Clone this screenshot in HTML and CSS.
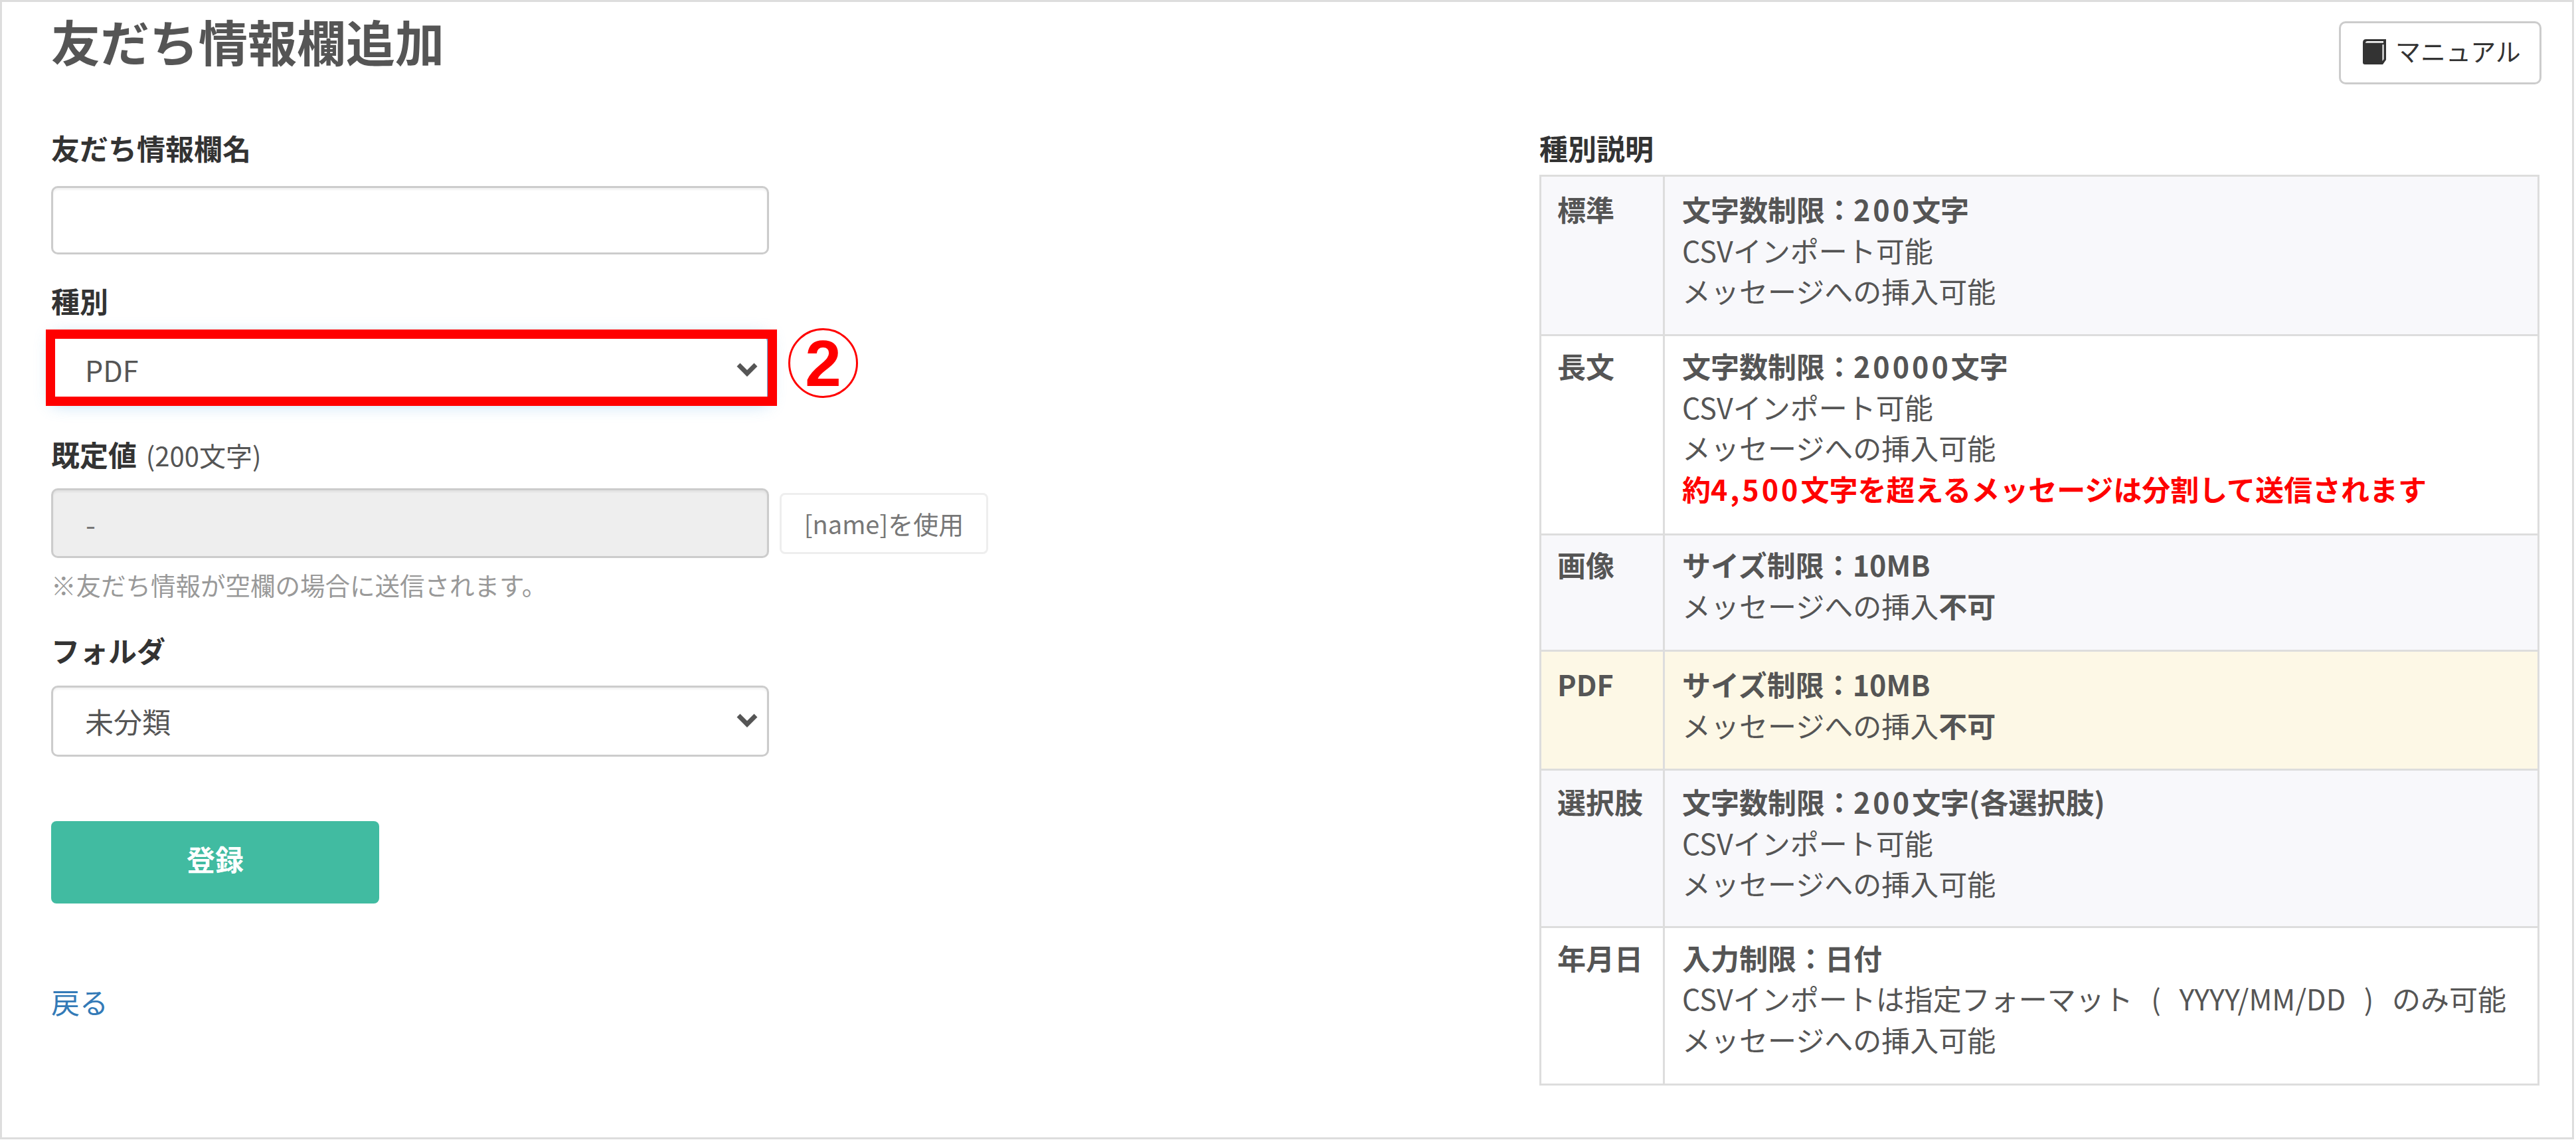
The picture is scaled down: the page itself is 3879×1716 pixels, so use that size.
FILE: index.html
```html
<!DOCTYPE html>
<html lang="ja">
<head>
<meta charset="utf-8">
<title>友だち情報欄追加</title>
<link rel="stylesheet" href="styles.css">
</head>
<body>
<div class="frame">
  <header class="header">
    <h1 class="title">友だち情報欄追加</h1>
    <button class="manual" type="button">
      <svg class="book" viewBox="0 0 35 38" aria-hidden="true"><path d="M5 0H35V31L30 38H3Q0 38 0 35V5Q0 0 5 0Z" fill="#333"/><path d="M4 5.500Q4 3 7 3H31V5.500H7Z" fill="#fff"/><path d="M29.500 8H31.500V30L29.500 33Z" fill="#fff"/></svg>
      <span>マニュアル</span>
    </button>
  </header>
  <div class="columns">
    <form class="form">
      <label class="label first name-label">友だち情報欄名</label>
      <input class="control name-input" type="text">

      <label class="label">種別</label>
      <div class="select-wrap marked">
        <select class="control select focus"><option>PDF</option></select>
        <svg class="chevron" viewBox="0 0 34 24" aria-hidden="true"><path d="M4 5L17 18L30 5" fill="none" stroke="#555" stroke-width="7"/></svg>
        <span class="red-box"></span>
        <span class="circled">2</span>
      </div>

      <label class="label third">既定値 <small class="limit">(200文字)</small></label>
      <div class="default-row">
        <input class="control default-input" type="text" value="-" disabled>
        <button class="use-name" type="button">[name]を使用</button>
      </div>
      <p class="note">※友だち情報が空欄の場合に送信されます。</p>

      <label class="label folder-label">フォルダ</label>
      <div class="select-wrap">
        <select class="control select folder-select"><option>未分類</option></select>
        <svg class="chevron" viewBox="0 0 34 24" aria-hidden="true"><path d="M4 5L17 18L30 5" fill="none" stroke="#555" stroke-width="7"/></svg>
      </div>

      <button class="submit" type="button">登録</button>
      <a class="back" href="#">戻る</a>
    </form>
    <section class="help">
      <div class="label first">種別説明</div>
      <table class="types">
        <tbody>
          <tr class="odd r1"><th>標準</th><td><b>文字数制限：<span class="num">200</span>文字</b><br>CSVインポート可能<br>メッセージへの挿入可能</td></tr>
          <tr class="r2"><th>長文</th><td><b>文字数制限：<span class="num">20000</span>文字</b><br>CSVインポート可能<br>メッセージへの挿入可能<br><b class="warn">約<span class="num">4,500</span>文字を超えるメッセージは分割して送信されます</b></td></tr>
          <tr class="odd r3"><th>画像</th><td><b>サイズ制限：10MB</b><br>メッセージへの挿入<b>不可</b></td></tr>
          <tr class="active r4"><th>PDF</th><td><b>サイズ制限：10MB</b><br>メッセージへの挿入<b>不可</b></td></tr>
          <tr class="odd r5"><th>選択肢</th><td><b>文字数制限：<span class="num">200</span>文字(各選択肢)</b><br>CSVインポート可能<br>メッセージへの挿入可能</td></tr>
          <tr class="r6"><th>年月日</th><td><b>入力制限：日付</b><br><span class="wide-spaces">CSVインポートは指定フォーマット ( YYYY/MM/DD ) のみ可能</span><br>メッセージへの挿入可能</td></tr>
        </tbody>
      </table>
    </section>
  </div>
</div>
</body>
</html>
```
FILE: styles.css
```css
* { box-sizing: border-box; }
html, body { margin: 0; padding: 0; background: #fff; }
body {
  font-family: "Noto Sans CJK JP", "Noto Sans", sans-serif;
  color: #555;
  font-size: 43px;
  line-height: 61.6px;
}
.frame {
  width: 3876px;
  height: 1715px;
  border: 3px solid #ddd;
  padding: 29px 49px 0 74px;
}
.header {
  display: flex;
  justify-content: space-between;
  align-items: flex-start;
}
.title {
  margin: -2px 0 0;
  font-size: 74px;
  line-height: 62px;
  font-weight: 700;
  color: #555;
  letter-spacing: 0;
}
.manual {
  width: 305px;
  height: 95px;
  margin-right: -3px;
  display: flex;
  align-items: center;
  padding: 0 0 8px 33px;
  gap: 14px;
  background: #fff;
  border: 3px solid #ccc;
  border-radius: 10px;
  color: #333;
  font: inherit;
  font-size: 38px;
  line-height: 50px;
}
.book { width: 35px; height: 38px; flex: none; margin-top: 4px; }
.columns {
  display: grid;
  grid-template-columns: 2241px 1fr;
  margin-top: 64px;
}
.form { display: flex; flex-direction: column; align-items: flex-start; }
.label {
  display: block;
  margin: 44px 0 21px;
  font-weight: 700;
  color: #333;
  line-height: 62px;
}
.label.first { margin-top: 0; }
.label.name-label { margin-bottom: 27px; }
.label.third { margin: 43px 0 19px; }
.label.folder-label { margin: 41px 0 23px; }
.limit { font-size: 40px; font-weight: 400; color: #555; margin-left: 4px; }
.control {
  display: block;
  width: 1081px;
  height: 105px;
  border: 3px solid #ccc;
  border-radius: 10px;
  background: #fff;
  color: #555;
  font: inherit;
  padding: 0 49px;
  box-shadow: inset 0 3px 3px rgba(0,0,0,.05);
}
.name-input { height: 103px; }
.name-input + .label { margin-top: 38px; }
.select { appearance: none; -webkit-appearance: none; padding: 0 48px; }
.folder-select { height: 107px; }
.select.focus { box-shadow: 0 0 24px rgba(102,175,233,.45); border-color: #66afe9; }
.select-wrap { position: relative; width: 1081px; }
.chevron {
  position: absolute;
  right: 16px;
  top: 40px;
  width: 34px;
  height: 24px;
  pointer-events: none;
}
.red-box {
  position: absolute;
  top: -8px;
  left: -8px;
  right: -12px;
  bottom: -2px;
  border: 14px solid #f00;
}
.circled {
  position: absolute;
  top: -10px;
  left: 1110px;
  width: 105px;
  height: 105px;
  border: 3px solid #f00;
  border-radius: 50%;
  display: flex;
  align-items: center;
  justify-content: center;
  color: #f00;
  font-family: "Liberation Sans", sans-serif;
  font-weight: 700;
  font-size: 98px;
  line-height: 1;
}
.default-row { display: flex; align-items: center; gap: 16px; }
.default-input { background: #eee; color: #777; }
.use-name {
  width: 314px;
  height: 92px;
  padding: 0;
  background: #fff;
  border: 3px solid #eee;
  border-radius: 8px;
  color: #777;
  font: inherit;
  font-size: 38px;
  line-height: 50px;
}
.note {
  margin: 13px 0 0;
  font-size: 37.500px;
  line-height: 53px;
  color: #999;
}
.submit {
  width: 494px;
  height: 124px;
  margin-top: 97px;
  border: 0;
  border-radius: 8px;
  background: #41bba1;
  color: #fff;
  font: inherit;
  font-weight: 700;
  padding: 0 0 10px;
}
.back {
  margin-top: 116px;
  color: #337ab7;
  text-decoration: none;
  line-height: 62px;
}
.help .label { margin-bottom: 10px; }
.types {
  width: 100%;
  table-layout: fixed;
  border-collapse: collapse;
  line-height: 61.6px;
}
.types th, .types td {
  border: 3px solid #ddd;
  vertical-align: top;
  text-align: left;
}
.types th { width: 186px; font-weight: 700; white-space: nowrap; padding-left: 24px; padding-right: 0; }
.types td { padding-left: 26px; padding-right: 10px; }
.r1 th, .r1 td { padding-top: 18px; padding-bottom: 34.2px; }
.r2 th, .r2 td { padding-top: 14px; padding-bottom: 36.6px; }
.r3 th, .r3 td { padding-top: 13px; padding-bottom: 35.8px; }
.r4 th, .r4 td { padding-top: 18px; padding-bottom: 34.8px; }
.r5 th, .r5 td { padding-top: 16px; padding-bottom: 33.2px; }
.r6 th, .r6 td { padding-top: 14px; padding-bottom: 35.2px; }
.num { letter-spacing: 4px; }
.wide-spaces { word-spacing: 18px; }
.odd { background: #f8f8fb; }
.active { background: #fdf8e6; }
.warn { color: #f00; }
```
